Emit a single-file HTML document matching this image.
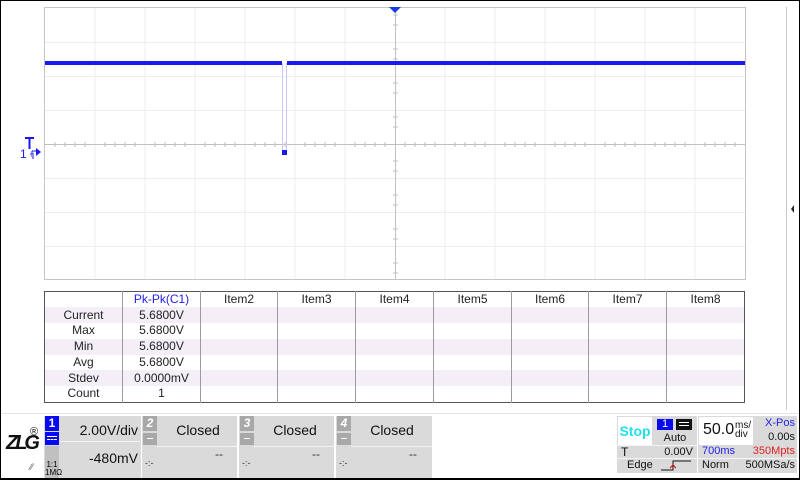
<!DOCTYPE html>
<html><head><style>
*{margin:0;padding:0;box-sizing:border-box}
body{width:800px;height:480px;position:relative;background:#fff;font-family:"Liberation Sans",sans-serif;overflow:hidden}
.a{position:absolute}
table{border-collapse:collapse;position:absolute;left:44px;top:291px;font-size:12px;color:#222}
td{border-left:1px solid #a09aa0;height:15.8px;text-align:center;padding:0;line-height:15px}
tr.s td{background:#f4eff6}
.g{background:#dadada}
.t{font-size:14px;color:#111}
</style></head><body>
<div class="a" style="left:0;top:0;width:800px;height:480px;border:1px solid #000;border-bottom:2px solid #000"></div>
<svg class="a" style="left:0;top:0" width="800" height="290">
<rect x="44.5" y="7.5" width="701" height="272" fill="#fff" stroke="#c4c4c4"/>
<g stroke="#eeeeee">
<line x1="95" y1="8" x2="95" y2="279"/><line x1="145" y1="8" x2="145" y2="279"/><line x1="195" y1="8" x2="195" y2="279"/><line x1="245" y1="8" x2="245" y2="279"/><line x1="295" y1="8" x2="295" y2="279"/><line x1="345" y1="8" x2="345" y2="279"/><line x1="445" y1="8" x2="445" y2="279"/><line x1="495" y1="8" x2="495" y2="279"/><line x1="545" y1="8" x2="545" y2="279"/><line x1="595" y1="8" x2="595" y2="279"/><line x1="645" y1="8" x2="645" y2="279"/><line x1="695" y1="8" x2="695" y2="279"/>
<line x1="45" y1="42.5" x2="745" y2="42.5"/><line x1="45" y1="76.5" x2="745" y2="76.5"/><line x1="45" y1="110.5" x2="745" y2="110.5"/><line x1="45" y1="178.5" x2="745" y2="178.5"/><line x1="45" y1="212.5" x2="745" y2="212.5"/><line x1="45" y1="246.5" x2="745" y2="246.5"/>
</g>
<g stroke="#c0c0c0">
<line x1="45" y1="144.5" x2="745" y2="144.5"/><line x1="395.5" y1="8" x2="395.5" y2="279"/>
<path d="M55 142v5M65 142v5M75 142v5M85 142v5M105 142v5M115 142v5M125 142v5M135 142v5M155 142v5M165 142v5M175 142v5M185 142v5M205 142v5M215 142v5M225 142v5M235 142v5M255 142v5M265 142v5M275 142v5M285 142v5M305 142v5M315 142v5M325 142v5M335 142v5M355 142v5M365 142v5M375 142v5M385 142v5M405 142v5M415 142v5M425 142v5M435 142v5M455 142v5M465 142v5M475 142v5M485 142v5M505 142v5M515 142v5M525 142v5M535 142v5M555 142v5M565 142v5M575 142v5M585 142v5M605 142v5M615 142v5M625 142v5M635 142v5M655 142v5M665 142v5M675 142v5M685 142v5M705 142v5M715 142v5M725 142v5M735 142v5"/>
<path d="M393 15h5M393 49h5M393 83h5M393 117h5M393 171h5M393 205h5M393 239h5M393 273h5M393 25h5M393 59h5M393 93h5M393 127h5M393 161h5M393 195h5M393 229h5M393 263h5"/>
</g>
<rect x="45" y="61" width="237" height="4" fill="#1a1aee"/>
<rect x="287" y="61" width="458" height="4" fill="#1a1aee"/>
<line x1="282.5" y1="63" x2="282.5" y2="152" stroke="#c8c8f4"/>
<line x1="286.5" y1="63" x2="286.5" y2="152" stroke="#c8c8f4"/>
<rect x="282" y="150" width="5" height="5" fill="#1a1aee"/>
<path d="M389 7h12l-6 6z" fill="#1a3ae6"/>
<path d="M25 138h9M29.5 138v11" stroke="#1a1aee" stroke-width="2"/>
<text x="20" y="158" font-size="12" fill="#1a1aee" font-family="Liberation Sans">1</text>
<path d="M30 154h4M31 156h3M32 158h2M32 151v3" stroke="#1a1aee"/>
<path d="M32 151h4" stroke="#1a1aee"/>
<path d="M36 148l5 4-5 4z" fill="#1a1aee"/>
<line x1="786.5" y1="7" x2="786.5" y2="290" stroke="#c8c8c8"/>
<path d="M794 205l-3 4 3 4z" fill="#222"/>
</svg>
<div class="a" style="left:786px;top:290px;width:1px;height:120px;background:#c8c8c8"></div>
<table style="width:701px;border:1px solid #555">
<colgroup><col style="width:78px"><col style="width:78px"><col style="width:77px"><col style="width:78px"><col style="width:78px"><col style="width:78px"><col style="width:77px"><col style="width:78px"><col></colgroup>
<tr><td style="border-left:0"></td><td style="color:#2222ee">Pk-Pk(C1)</td><td>Item2</td><td>Item3</td><td>Item4</td><td>Item5</td><td>Item6</td><td>Item7</td><td>Item8</td></tr>
<tr class="s"><td style="border-left:0">Current</td><td>5.6800V</td><td></td><td></td><td></td><td></td><td></td><td></td><td></td></tr>
<tr><td style="border-left:0">Max</td><td>5.6800V</td><td></td><td></td><td></td><td></td><td></td><td></td><td></td></tr>
<tr class="s"><td style="border-left:0">Min</td><td>5.6800V</td><td></td><td></td><td></td><td></td><td></td><td></td><td></td></tr>
<tr><td style="border-left:0">Avg</td><td>5.6800V</td><td></td><td></td><td></td><td></td><td></td><td></td><td></td></tr>
<tr class="s"><td style="border-left:0">Stdev</td><td>0.0000mV</td><td></td><td></td><td></td><td></td><td></td><td></td><td></td></tr>
<tr><td style="border-left:0">Count</td><td>1</td><td></td><td></td><td></td><td></td><td></td><td></td><td></td></tr>
</table>
<div class="a" style="left:1px;top:413px;width:798px;height:1px;background:#e4e4e4"></div>
<!-- logo -->
<div class="a" style="left:6px;top:432px;font:italic bold 20px 'Liberation Sans';letter-spacing:-3px;color:#111">ZLG</div>
<div class="a" style="left:30px;top:426px;font-size:11px;color:#111">®</div>
<div class="a" style="left:30px;top:462px;font-size:9px;color:#555">⁄⁄</div>
<!-- ch1 -->
<div class="a g" style="left:44px;top:416px;width:97px;height:62px"></div>
<div class="a" style="left:45px;top:416px;width:14px;height:15px;background:#0a0af0;color:#fff;font:bold 12px 'Liberation Sans';text-align:center;line-height:14px">1</div>
<div class="a" style="left:45px;top:432px;width:14px;height:13px;background:#0a0af0"><div style="margin:4px 2px 0;height:1px;background:#fff"></div><div style="margin:2px 2px 0;border-top:1px dashed #fff"></div></div>
<div class="a" style="left:45px;top:446px;width:14px;height:32px;background:#c0c0c0;font-size:8px;text-align:center;line-height:8px;padding-top:15px">1:1<br>1MΩ</div>
<div class="a" style="left:60px;top:441px;width:80px;height:1px;background:#f4f4f4"></div>
<div class="a t" style="left:60px;top:422px;width:78px;text-align:right">2.00V/div</div>
<div class="a t" style="left:60px;top:450px;width:78px;text-align:right">-480mV</div>
<!-- ch 2..4 -->
<div class="a g" style="left:142px;top:416px;width:95px;height:62px"></div>
<div class="a g" style="left:239px;top:416px;width:95px;height:62px"></div>
<div class="a g" style="left:336px;top:416px;width:96px;height:62px"></div>
<div class="a" style="left:143px;top:416px;width:14px;height:15px;background:#a8a8a8;color:#fff;font:bold italic 12px 'Liberation Sans';text-align:center">2</div>
<div class="a" style="left:240px;top:416px;width:14px;height:15px;background:#a8a8a8;color:#fff;font:bold italic 12px 'Liberation Sans';text-align:center">3</div>
<div class="a" style="left:337px;top:416px;width:14px;height:15px;background:#a8a8a8;color:#fff;font:bold italic 12px 'Liberation Sans';text-align:center">4</div>
<div class="a" style="left:143px;top:433px;width:14px;height:12px;background:#a8a8a8"><div style="margin:5px 4px 0;height:1px;background:#fff"></div></div>
<div class="a" style="left:240px;top:433px;width:14px;height:12px;background:#a8a8a8"><div style="margin:5px 4px 0;height:1px;background:#fff"></div></div>
<div class="a" style="left:337px;top:433px;width:14px;height:12px;background:#a8a8a8"><div style="margin:5px 4px 0;height:1px;background:#fff"></div></div>
<div class="a" style="left:157px;top:446px;width:80px;height:1px;background:#f2f2f2"></div>
<div class="a" style="left:254px;top:446px;width:80px;height:1px;background:#f2f2f2"></div>
<div class="a" style="left:351px;top:446px;width:81px;height:1px;background:#f2f2f2"></div>
<div class="a t" style="left:158px;top:422px;width:80px;text-align:center">Closed</div>
<div class="a t" style="left:255px;top:422px;width:80px;text-align:center">Closed</div>
<div class="a t" style="left:352px;top:422px;width:80px;text-align:center">Closed</div>
<div class="a" style="left:215px;top:447px;font-size:12px;color:#333">--</div>
<div class="a" style="left:312px;top:447px;font-size:12px;color:#333">--</div>
<div class="a" style="left:409px;top:447px;font-size:12px;color:#333">--</div>
<div class="a" style="left:145px;top:458px;font-size:9px;color:#333">-:-</div>
<div class="a" style="left:242px;top:458px;font-size:9px;color:#333">-:-</div>
<div class="a" style="left:339px;top:458px;font-size:9px;color:#333">-:-</div>
<!-- trigger -->
<div class="a g" style="left:617px;top:416px;width:80px;height:57px"></div>
<div class="a" style="left:618px;top:417px;width:34px;height:28px;background:#fff;color:#22e0e8;font:bold 14px 'Liberation Sans';text-align:center;line-height:28px">Stop</div>
<div class="a" style="left:657px;top:419px;width:16px;height:11px;background:#0a0af0;color:#fff;font-size:11px;text-align:center;line-height:11px">1</div>
<div class="a" style="left:676px;top:419px;width:16px;height:11px;background:#111"><div style="margin:3px 3px 0;height:1px;background:#fff"></div><div style="margin:2px 3px 0;height:1px;background:#fff"></div></div>
<div class="a" style="left:655px;top:432px;width:40px;text-align:center;font-size:11px;color:#111">Auto</div>
<div class="a" style="left:617px;top:445px;width:80px;height:1px;background:#f4f4f4"></div>
<div class="a" style="left:617px;top:458px;width:80px;height:1px;background:#f4f4f4"></div>
<div class="a" style="left:621px;top:445px;font-size:12px;color:#111">T</div>
<div class="a" style="left:655px;top:446px;width:38px;text-align:right;font-size:11px;color:#111">0.00V</div>
<div class="a" style="left:627px;top:459px;font-size:11px;color:#111">Edge</div>
<svg class="a" style="left:660px;top:459px" width="32" height="14"><path d="M1 11h12v-9h18" stroke="#111" fill="none"/><path d="M10 9l3-3 3 3" stroke="#d00" fill="none"/></svg>
<!-- timebase -->
<div class="a g" style="left:698px;top:416px;width:99px;height:57px"></div>
<div class="a" style="left:699px;top:417px;width:54px;height:28px;background:#fff"></div>
<div class="a" style="left:703px;top:421px;font-size:16px;color:#111">50.0</div>
<div class="a" style="left:735px;top:421px;font-size:10px;line-height:9px;color:#111">ms/<br>div</div>
<div class="a" style="left:755px;top:417px;width:40px;text-align:right;font-size:11px;color:#2222ee">X-Pos</div>
<div class="a" style="left:755px;top:431px;width:40px;text-align:right;font-size:11px;color:#111">0.00s</div>
<div class="a" style="left:698px;top:458px;width:99px;height:1px;background:#f4f4f4"></div>
<div class="a" style="left:702px;top:445px;font-size:11px;color:#2222ee">700ms</div>
<div class="a" style="left:745px;top:445px;width:50px;text-align:right;font-size:11px;color:#e02020">350Mpts</div>
<div class="a" style="left:702px;top:459px;font-size:11px;color:#111">Norm</div>
<div class="a" style="left:735px;top:459px;width:60px;text-align:right;font-size:11px;color:#111">500MSa/s</div>
</body></html>
